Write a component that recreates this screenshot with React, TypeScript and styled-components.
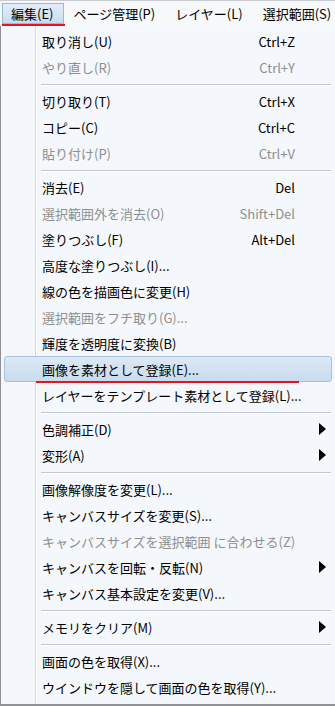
import { FC } from "react"
import styled, { createGlobalStyle } from 'styled-components';

type TEntry =
    | { kind: 'item', label: string, shortcut?: string, disabled?: boolean, submenu?: boolean, active?: boolean }
    | { kind: 'sep' }

const entries: TEntry[] = [
    { kind: 'item', label: '取り消し(U)', shortcut: 'Ctrl+Z' },
    { kind: 'item', label: 'やり直し(R)', shortcut: 'Ctrl+Y', disabled: true },
    { kind: 'sep' },
    { kind: 'item', label: '切り取り(T)', shortcut: 'Ctrl+X' },
    { kind: 'item', label: 'コピー(C)', shortcut: 'Ctrl+C' },
    { kind: 'item', label: '貼り付け(P)', shortcut: 'Ctrl+V', disabled: true },
    { kind: 'sep' },
    { kind: 'item', label: '消去(E)', shortcut: 'Del' },
    { kind: 'item', label: '選択範囲外を消去(O)', shortcut: 'Shift+Del', disabled: true },
    { kind: 'item', label: '塗りつぶし(F)', shortcut: 'Alt+Del' },
    { kind: 'item', label: '高度な塗りつぶし(I)...' },
    { kind: 'item', label: '線の色を描画色に変更(H)' },
    { kind: 'item', label: '選択範囲をフチ取り(G)...', disabled: true },
    { kind: 'item', label: '輝度を透明度に変換(B)' },
    { kind: 'item', label: '画像を素材として登録(E)...', active: true },
    { kind: 'item', label: 'レイヤーをテンプレート素材として登録(L)...' },
    { kind: 'sep' },
    { kind: 'item', label: '色調補正(D)', submenu: true },
    { kind: 'item', label: '変形(A)', submenu: true },
    { kind: 'sep' },
    { kind: 'item', label: '画像解像度を変更(L)...' },
    { kind: 'item', label: 'キャンバスサイズを変更(S)...' },
    { kind: 'item', label: 'キャンバスサイズを選択範囲 に合わせる(Z)', disabled: true },
    { kind: 'item', label: 'キャンバスを回転・反転(N)', submenu: true },
    { kind: 'item', label: 'キャンバス基本設定を変更(V)...' },
    { kind: 'sep' },
    { kind: 'item', label: 'メモリをクリア(M)', submenu: true },
    { kind: 'sep' },
    { kind: 'item', label: '画面の色を取得(X)...' },
    { kind: 'item', label: 'ウインドウを隠して画面の色を取得(Y)...' },
]

const topMenus = ['編集(E)', 'ページ管理(P)', 'レイヤー(L)', '選択範囲(S)']

const App: FC = () => {
    return (
        <>
            <GlobalStyle />
            <Window>
                <MenuBar>
                    {topMenus.map((m, i) => (
                        <TopItem key={m} open={i === 0}>
                            {m}
                            {i === 0 && <RedMark />}
                        </TopItem>
                    ))}
                </MenuBar>
                <Dropdown>
                    {entries.map((e, i) =>
                        e.kind === 'sep' ? (
                            <Separator key={i} />
                        ) : (
                            <Row key={i} disabled={e.disabled} active={e.active}>
                                <span>{e.label}</span>
                                <Shortcut>{e.shortcut}</Shortcut>
                                <ArrowCell>{e.submenu && <Arrow />}</ArrowCell>
                                {e.active && <RowMark />}
                            </Row>
                        )
                    )}
                </Dropdown>
            </Window>
        </>
    )
}

export default App

const GlobalStyle = createGlobalStyle`
    html, body {
        margin: 0;
        padding: 0;
        background: #f4f7fb;
    }
    body {
        font-family: "Noto Sans CJK JP", "Noto Sans", sans-serif;
        font-size: 13px;
        color: #000;
    }
`

const Window = styled.div`
    width: 335px;
    height: 706px;
    overflow: hidden;
    background: #f4f7fb;
`

const MenuBar = styled.div`
    height: 26px;
    box-sizing: border-box;
    display: flex;
    align-items: stretch;
    padding: 2px 0 2px 2px;
    border-top: 1px solid #c9ccd0;
    background: #f6f8fa;
    white-space: nowrap;
`

const TopItem = styled.div<{ open?: boolean }>`
    position: relative;
    display: flex;
    align-items: center;
    padding: 0 10px 0 8px;
    box-sizing: border-box;
    border: 1px solid ${p => (p.open ? '#9cb8d4' : 'transparent')};
    background: ${p => (p.open ? 'linear-gradient(#e3eef8, #c9dcee)' : 'transparent')};
`

const RedMark = styled.span`
    position: absolute;
    left: -1px;
    right: -2px;
    bottom: -3px;
    height: 2px;
    background: #e8141c;
`

const Dropdown = styled.div`
    height: 680px;
    box-sizing: border-box;
    padding-top: 2px;
    border-left: 1px solid #8c8f93;
    border-bottom: 2px solid #8f9296;
    background:
        linear-gradient(to right, transparent 34px, #d6d9dd 34px, #d6d9dd 35px, #ffffff 35px, #ffffff 36px, transparent 36px),
        #f4f7fb;
`

const Row = styled.div<{ disabled?: boolean, active?: boolean }>`
    position: relative;
    height: 26px;
    box-sizing: border-box;
    display: grid;
    grid-template-columns: 1fr auto 40px;
    align-items: center;
    padding-left: 41px;
    margin: 0 ${p => (p.active ? '3px 0 3px' : '0')};
    ${p => p.active && `
        padding-left: 37px;
        border: 1px solid #a9c2dc;
        border-radius: 3px;
        background: linear-gradient(#dde9f5, #c8dbee);
    `}
    color: ${p => (p.disabled ? '#8f8f8f' : '#000')};
    white-space: nowrap;
`

const Shortcut = styled.span`
    text-align: right;
`

const ArrowCell = styled.span`
    display: flex;
    justify-content: flex-end;
    padding-right: 9px;
`

const Arrow = styled.span`
    width: 0;
    height: 0;
    border-top: 6px solid transparent;
    border-bottom: 6px solid transparent;
    border-left: 7px solid #000;
`

const RowMark = styled.span`
    position: absolute;
    left: 31px;
    width: 263px;
    bottom: -2px;
    height: 2px;
    background: #e8141c;
`

const Separator = styled.div`
    height: 8px;
    display: flex;
    align-items: center;
    padding-left: 40px;
    padding-right: 4px;
    &::after {
        content: '';
        flex: 1;
        height: 1px;
        background: #c3c6ca;
        box-shadow: 0 1px 0 #ffffff;
    }
`
